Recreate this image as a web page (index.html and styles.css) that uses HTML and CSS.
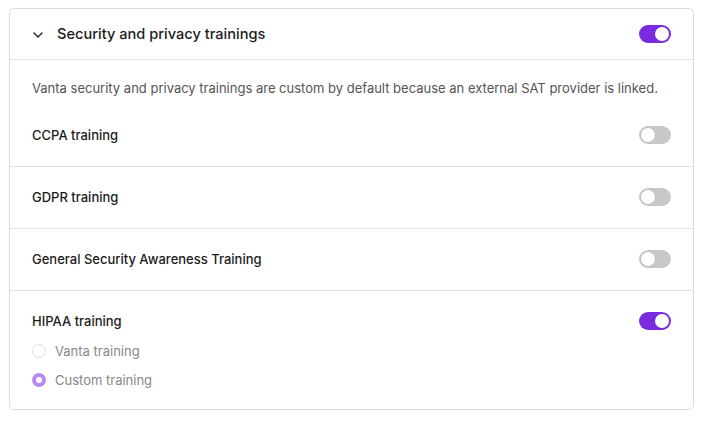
FILE: index.html
```html
<!DOCTYPE html>
<html>
<head>
<meta charset="utf-8">
<link rel="stylesheet" href="styles.css">
</head>
<body>
<div class="card">
  <div class="header">
    <div class="header-left">
      <svg class="chevron" width="10" height="6" viewBox="0 0 10 6"><path d="M1 1l4 4 4-4" fill="none" stroke="#222" stroke-width="1.4" stroke-linecap="round" stroke-linejoin="round"/></svg>
      <span class="title">Security and privacy trainings</span>
    </div>
    <span class="toggle on"><span class="knob"></span></span>
  </div>
  <div class="desc">Vanta security and privacy trainings are custom by default because an external SAT provider is linked.</div>
  <div class="row first-row">
    <span class="label">CCPA training</span>
    <span class="toggle"><span class="knob"></span></span>
  </div>
  <div class="row bordered">
    <span class="label">GDPR training</span>
    <span class="toggle"><span class="knob"></span></span>
  </div>
  <div class="row bordered">
    <span class="label">General Security Awareness Training</span>
    <span class="toggle"><span class="knob"></span></span>
  </div>
  <div class="section bordered">
    <div class="section-head">
      <span class="label">HIPAA training</span>
      <span class="toggle on"><span class="knob"></span></span>
    </div>
    <div class="radio-row first"><span class="radio"></span><span class="radio-label">Vanta training</span></div>
    <div class="radio-row"><span class="radio checked"></span><span class="radio-label">Custom training</span></div>
  </div>
</div>
</body>
</html>
```
FILE: styles.css
```css
* { box-sizing: border-box; }
body {
  margin: 0;
  padding: 8px 10px 0 9px;
  font-family: Inter, "Noto Sans", sans-serif;
  background: #fff;
  color: #1a1a1a;
}
.card {
  width: 685px;
  height: 402px;
  border: 1px solid #dcdcdc;
  border-radius: 5px;
}
.header {
  height: 51px;
  display: flex;
  align-items: center;
  justify-content: space-between;
  padding: 0 22px 0 23px;
  border-bottom: 1px solid #e2e2e2;
}
.header-left { display: flex; align-items: center; }
.chevron { margin-right: 14px; margin-top: 1px; }
.title { font-size: 14.6px; font-weight: 500; color: #1c1c1c; }
.desc {
  font-size: 13px;
  color: #555;
  padding: 20px 22px 0 22px;
  line-height: 16px;
  height: 45px;
}
.row {
  height: 62px;
  display: flex;
  align-items: center;
  justify-content: space-between;
  padding: 0 22px 2px 22px;
}
.row.first-row { height: 61px; }
.bordered { border-top: 1px solid #e2e2e2; }
.label { font-size: 13px; font-weight: 500; color: #1c1c1c; line-height: 16px; }
.toggle {
  width: 32px;
  height: 18px;
  border-radius: 9px;
  background: #c8c8c8;
  display: flex;
  align-items: center;
  padding: 0 2px;
  flex-shrink: 0;
}
.toggle.on { background: #7a2be0; justify-content: flex-end; }
.knob {
  width: 14px;
  height: 14px;
  border-radius: 50%;
  background: #fff;
  box-shadow: 0 0 0 0.5px rgba(0,0,0,0.08);
}
.section { padding: 22px 22px 0 22px; }
.section-head {
  display: flex;
  align-items: center;
  justify-content: space-between;
  height: 16px;
}
.radio-row {
  display: flex;
  align-items: center;
  height: 16px;
  margin-top: 13px;
}
.radio-row.first { margin-top: 14px; }
.radio {
  width: 14px;
  height: 14px;
  border-radius: 50%;
  border: 1px solid #dedede;
  background: #fff;
  margin-right: 9px;
}
.radio.checked {
  border: 4px solid #b98bf0;
}
.radio-label { font-size: 13px; color: #888; }
```
